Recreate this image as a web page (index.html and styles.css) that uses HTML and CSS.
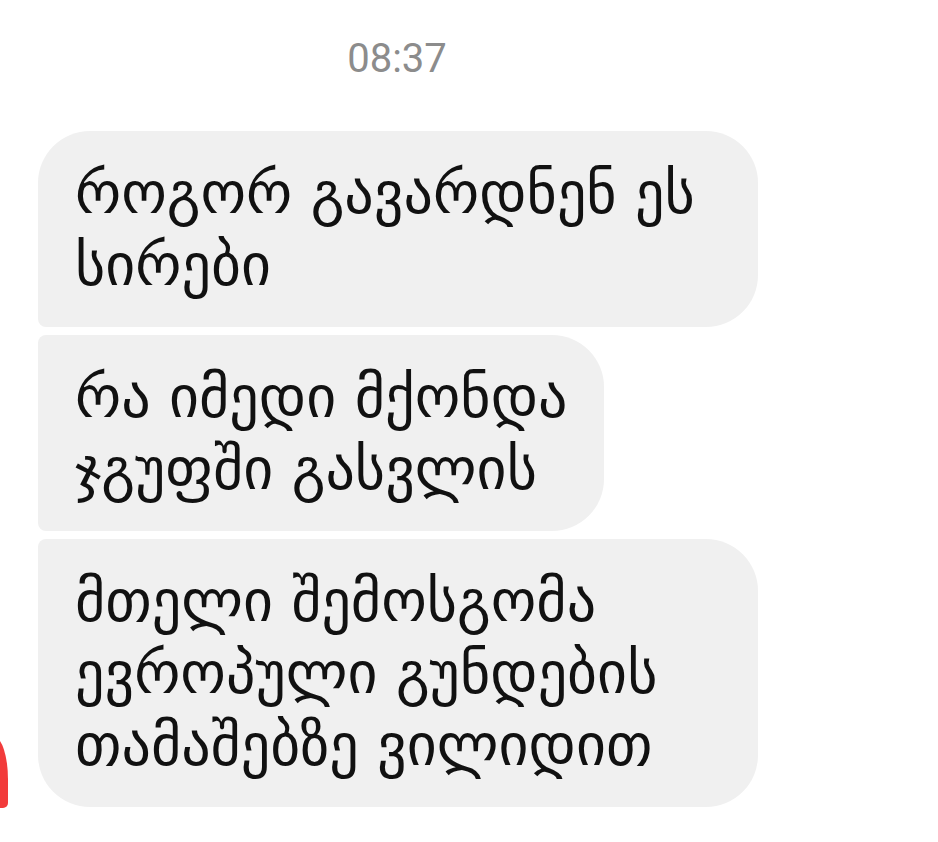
FILE: index.html
```html
<!DOCTYPE html>
<html lang="ka">
<head>
  <meta charset="UTF-8" />
  <title>ჩატი</title>
  <link rel="stylesheet" href="styles.css">
</head>
<body>

  <div class="chat">
    <div class="time">08:37</div>

    <!-- შეტყობინებები -->
    <div class="messages">
      <div class="bubble first full">როგორ გავარდნენ ეს<br>სირები</div>
      <div class="bubble middle">რა იმედი მქონდა<br>ჯგუფში გასვლის</div>
      <div class="bubble last full">მთელი შემოსგომა<br>ევროპული გუნდების<br>თამაშებზე ვილიდით</div>
    </div>

    <div class="reaction"></div>
  </div>

</body>
</html>
```

FILE: styles.css
```css
body {
  margin: 0;
  background: #fff;
  font-family: "DejaVu Sans", "Noto Sans", sans-serif;
}

.chat {
  position: relative;
  width: 938px;
  height: 842px;
  overflow: hidden;
}

.time {
  font-family: Roboto, "Liberation Sans", sans-serif;
  font-size: 40px;
  color: #8c8c8c;
  text-align: center;
  width: 794px;
  padding-top: 36px;
  line-height: 46px;
}

.messages {
  display: flex;
  flex-direction: column;
  align-items: flex-start;
  gap: 8px;
  margin: 49px 0 0 38px;
}

.bubble {
  background: #f0f0f0;
  color: #111;
  font-size: 58px;
  line-height: 72px;
  padding: 26px 36px 26px 37px;
  border-radius: 52px;
  white-space: nowrap;
}

.bubble.full {
  width: 720px;
  box-sizing: border-box;
}

.first {
  border-bottom-left-radius: 8px;
}

.middle {
  border-top-left-radius: 8px;
  border-bottom-left-radius: 8px;
}

.last {
  border-top-left-radius: 8px;
}

.reaction {
  position: absolute;
  left: -6px;
  top: 737px;
  width: 14px;
  height: 71px;
  background: #f23b3b;
  border-radius: 0 100% 5px 0 / 0 60% 5px 0;
}
```
